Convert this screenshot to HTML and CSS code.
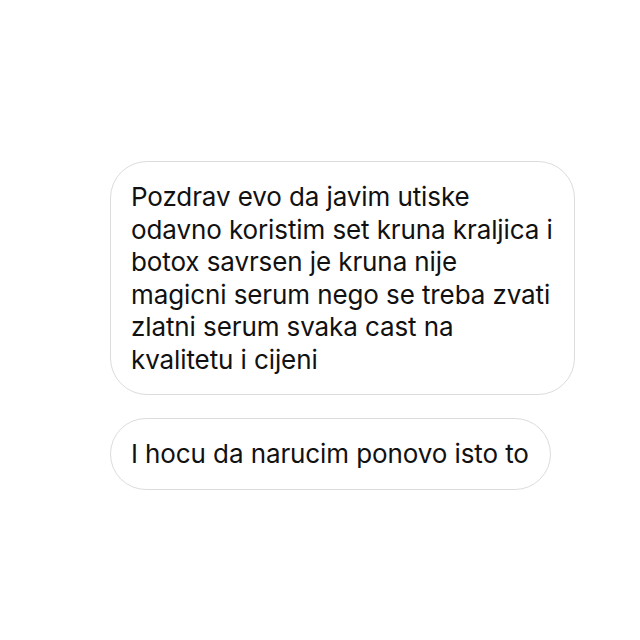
FILE: index.html
```html
<!DOCTYPE html>
<html lang="hr">
<head>
    <meta charset="UTF-8">
    <meta name="viewport" content="width=device-width, initial-scale=1.0">
    <title>Poruke</title>
    <link rel="stylesheet" href="styles.css">
</head>
<body>

<div class="chat">
    <div class="bubble bubble-long">
        Pozdrav evo da javim utiske<br>
        odavno koristim set kruna kraljica i<br>
        botox savrsen je kruna nije<br>
        magicni serum nego se treba zvati<br>
        zlatni serum svaka cast na<br>
        kvalitetu i cijeni
    </div>
    <div class="bubble bubble-short">
        I hocu da narucim ponovo isto to
    </div>
</div>

</body>
</html>
```

FILE: styles.css
```css
/* Message bubbles */
body {
    margin: 0;
    background: #ffffff;
    font-family: Inter, "Noto Sans", sans-serif;
    color: #111111;
}

.chat {
    display: flex;
    flex-direction: column;
    align-items: flex-start;
    gap: 23px;
    padding: 161px 0 0 110px;
}

.bubble {
    background: #ffffff;
    border: 1.5px solid #dcdcdc;
    border-radius: 37px;
    font-size: 26px;
    line-height: 32.5px;
    letter-spacing: -0.1px;
    white-space: nowrap;
    padding: 19px 21px 18px 20px;
}

.bubble-long {
    width: 422px;
}

.bubble-short {
    padding-top: 19px;
    padding-bottom: 18.5px;
}
```
